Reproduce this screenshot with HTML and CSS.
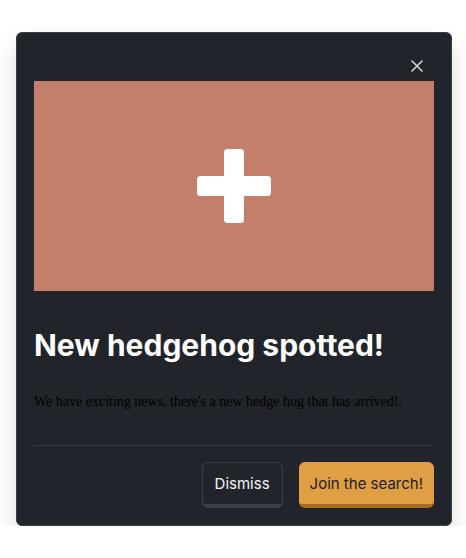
FILE: index.html
```html
<!DOCTYPE html>
<html>
<head>
<meta charset="utf-8">
<link rel="stylesheet" href="styles.css">
</head>
<body>
<div class="modal">
  <div class="modal-header">
    <button class="close" aria-label="Close">
      <svg width="12" height="12" viewBox="0 0 12 12"><path d="M1 1L11 11M11 1L1 11" stroke="#d4d4d8" stroke-width="1.6" stroke-linecap="round"/></svg>
    </button>
  </div>
  <div class="hero">
    <svg width="76" height="76" viewBox="0 0 76 76"><rect x="28" y="1" width="20" height="74" rx="3.5" fill="#fff"/><rect x="1" y="28" width="74" height="20" rx="3.5" fill="#fff"/></svg>
  </div>
  <h2 class="title">New hedgehog spotted!</h2>
  <p class="body">We have exciting news, there's a new hedge hog that has arrived!.</p>
  <hr class="divider">
  <div class="actions">
    <button class="btn btn-secondary">Dismiss</button>
    <button class="btn btn-primary">Join the search!</button>
  </div>
</div>
</body>
</html>
```
FILE: styles.css
```css
html, body {
  margin: 0;
  padding: 0;
  background: #ffffff;
}
.modal {
  box-sizing: border-box;
  width: 436px;
  margin: 32px 0 0 16px;
  padding: 17px;
  background: #21242b;
  border: 1px solid #3b3e45;
  border-radius: 6px;
  box-shadow: 0 12px 24px rgba(0, 0, 0, 0.14);
}
.modal-header {
  display: flex;
  justify-content: flex-end;
  height: 31px;
}
.close {
  width: 32px;
  height: 31px;
  margin-right: 1px;
  padding: 0;
  background: none;
  border: 0;
  display: flex;
  align-items: center;
  justify-content: center;
}
.hero {
  height: 210px;
  background: #c47f6a;
  display: flex;
  align-items: center;
  justify-content: center;
}
.title {
  margin: 36px 0 0 0;
  font-family: Inter, "Noto Sans", sans-serif;
  font-size: 30px;
  font-weight: 700;
  line-height: 36px;
  color: #ffffff;
}
.body {
  margin: 30px 0 0 0;
  font-family: "Liberation Serif", serif;
  font-size: 14px;
  line-height: 18px;
  color: #000000;
}
.divider {
  margin: 34px 0 0 0;
  border: 0;
  height: 1px;
  background: #393c44;
}
.actions {
  display: flex;
  justify-content: flex-end;
  gap: 16px;
  margin-top: 16px;
}
.btn {
  box-sizing: border-box;
  height: 46px;
  padding: 0 12px;
  font-family: Inter, "Noto Sans", sans-serif;
  font-size: 15px;
  border-radius: 6px;
  border: 1px solid;
  border-bottom-width: 4px;
}
.btn-secondary {
  background: #21242b;
  color: #f4f4f5;
  border-color: #3d4047;
}
.btn-primary {
  background: #e09f45;
  color: #1e1e1e;
  border-color: #e09f45;
  border-bottom-color: #a56d20;
  padding: 0 10px;
}
```
